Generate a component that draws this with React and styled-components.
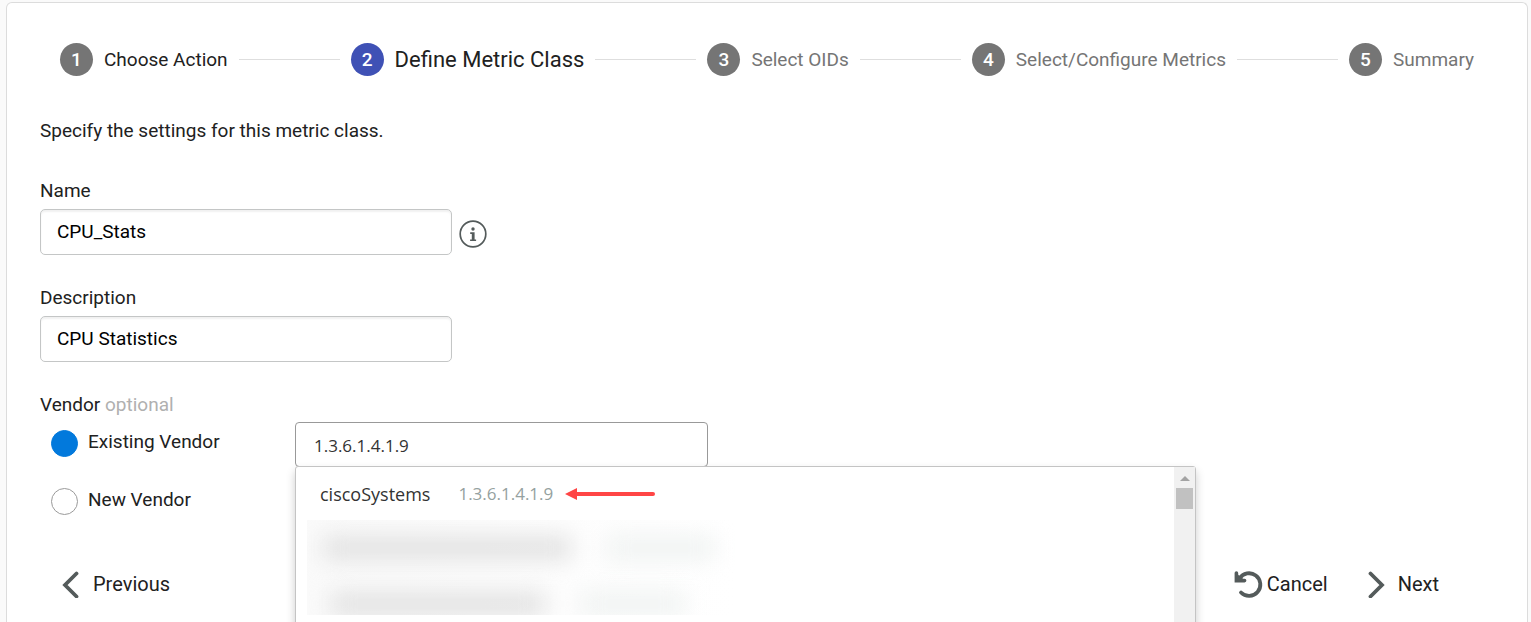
import { Fragment, useState } from 'react';
import styled, { createGlobalStyle } from 'styled-components';

const GlobalStyle = createGlobalStyle`
  * {
    box-sizing: border-box;
  }

  body {
    margin: 0;
    background: #fafafa;
    color: #212121;
    font-family: Roboto, "Liberation Sans", sans-serif;
    font-size: 19px;
    line-height: 24px;
  }

  button, input {
    font: inherit;
    color: inherit;
  }
`;

const Page = styled.div`
  height: 100vh;
  display: flex;
  padding: 2px 3px 0 6px;
  overflow: hidden;
`;

const Card = styled.main`
  flex: 1;
  padding: 40px 33px 0;
  background: #fff;
  border: 1px solid #dcdcdc;
  border-bottom: none;
  border-radius: 6px 6px 0 0;
`;

const Stepper = styled.ol`
  display: flex;
  align-items: center;
  gap: 11px;
  margin: 0 0 43px;
  padding: 0 20px;
  list-style: none;
`;

const Step = styled.li`
  display: flex;
  align-items: center;
  gap: 11px;
  white-space: nowrap;
  color: ${props => props.$pending ? '#757575' : '#212121'};
  font-size: ${props => props.$active ? '22px' : '19px'};
`;

const StepNumber = styled.span`
  width: 33px;
  height: 33px;
  display: flex;
  justify-content: center;
  align-items: center;
  border-radius: 50%;
  background: ${props => props.$active ? '#3f51b5' : '#757575'};
  color: #fff;
  font-size: 19px;
  font-weight: 500;
`;

const StepLine = styled.li`
  flex: 1;
  height: 1px;
  background: #dedede;
`;

const Intro = styled.p`
  margin: 0 0 36px;
`;

const Field = styled.div`
  display: flex;
  flex-direction: column;
  gap: 6px;
  margin-bottom: 31px;
`;

const FieldRow = styled.div`
  display: flex;
  align-items: center;
  gap: 7px;
`;

const TextInput = styled.input`
  width: 412px;
  height: 46px;
  padding: 0 16px 2px;
  background: #fff;
  color: #000;
  border: 1px solid #c4c6c6;
  border-radius: 5px;
  box-shadow: inset 0 2px 2px rgba(0, 0, 0, 0.06);
  outline: none;
`;

const InfoButton = styled.button`
  display: flex;
  padding: 4px 0 0;
  border: none;
  background: none;
  color: #545b5b;
`;

const VendorGroup = styled.fieldset`
  min-width: 0;
  margin: 0;
  padding: 0;
  border: none;
`;

const Legend = styled.legend`
  padding: 0 0 5px;
`;

const Optional = styled.span`
  color: #b0b0b0;
`;

const VendorBody = styled.div`
  display: grid;
  grid-template-columns: 255px 1fr;
`;

const RadioList = styled.div`
  display: flex;
  flex-direction: column;
  gap: 31px;
  padding: 8px 0 0 11px;
`;

const RadioLabel = styled.label`
  height: 27px;
  display: flex;
  gap: 10px;
`;

const Radio = styled.input`
  appearance: none;
  width: 27px;
  height: 27px;
  margin: 0;
  border: 1px solid #9a9a9a;
  border-radius: 50%;
  background: #fff;

  &:checked {
    border-color: #0279dc;
    background: #0279dc;
  }
`;

const Combobox = styled.div`
  position: relative;
  font-family: "Open Sans", "Noto Sans", sans-serif;
`;

const ComboInput = styled.input`
  display: block;
  width: 413px;
  height: 45px;
  padding: 2px 18px 0;
  background: #fff;
  color: #333;
  font-size: 17px;
  border: 1px solid #999;
  border-radius: 4px;
  outline: none;
`;

const Menu = styled.div`
  position: absolute;
  top: 44px;
  left: 0;
  z-index: 10;
  width: 901px;
  height: 280px;
  display: flex;
  background: #fff;
  border: 1px solid #c4c4c4;
  border-radius: 3px;
  box-shadow: 0 5px 10px rgba(0, 0, 0, 0.2);
`;

const Options = styled.ul`
  flex: 1;
  margin: 0;
  padding: 0;
  list-style: none;
`;

const Option = styled.li`
  height: 53px;
  display: flex;
  align-items: center;
  padding: 1px 0 0 24px;
  color: #333;
  font-size: 18px;
`;

const Oid = styled.span`
  margin: 0 12px 0 28px;
  color: #95a1a0;
  font-size: 17px;
`;

const Redacted = styled.li`
  width: 428px;
  height: 95px;
  display: flex;
  flex-direction: column;
  gap: 32px;
  margin-left: 11px;
  padding: 16px 16px 0;
  overflow: hidden;
  background: linear-gradient(to right, #fafafa, #fff);
`;

const RedactedRow = styled.div`
  display: flex;
  flex: none;
  gap: 36px;
  padding-left: ${props => props.$indent ? '8px' : '0'};
  filter: blur(11px);
`;

const Smudge = styled.span`
  width: ${props => props.$width};
  height: 24px;
  background: ${props => props.$light ? '#f0f3f2' : '#e2e2e2'};
`;

const ScrollTrack = styled.div`
  width: 21px;
  display: flex;
  flex-direction: column;
  align-items: center;
  background: #f1f1f1;
`;

const ScrollArrow = styled.span`
  margin: 9px 0 7px;
  border: 5px solid transparent;
  border-top: none;
  border-bottom-color: #a3a3a3;
`;

const ScrollThumb = styled.span`
  width: 17px;
  height: 21px;
  background: #c1c1c1;
`;

const Footer = styled.footer`
  display: flex;
  align-items: center;
  margin-top: 55px;
  padding: 0 55px 0 21px;
`;

const NavButton = styled.button`
  display: flex;
  align-items: center;
  gap: ${props => props.$tight ? '4px' : '12px'};
  margin-left: ${props => props.$push ? 'auto' : '0'};
  margin-right: ${props => props.$tight ? '38px' : '0'};
  padding: 0;
  border: none;
  background: none;
  font-size: 20px;
  line-height: 28px;
  cursor: pointer;

  svg {
    color: #545b5b;
  }
`;

const STEPS = ['Choose Action', 'Define Metric Class', 'Select OIDs', 'Select/Configure Metrics', 'Summary'];
const CURRENT_STEP = 1;

const InfoIcon = () => (
  <svg width="28" height="28" viewBox="0 0 28 28" fill="none" aria-hidden="true">
    <circle cx="14" cy="14" r="12.8" stroke="currentColor" strokeWidth="1.7" />
    <circle cx="14" cy="9" r="1.7" fill="currentColor" />
    <path d="M11.2 12.2h4.4v7.2h1.5v1.7h-6v-1.7h1.7v-5.5h-1.6z" fill="currentColor" />
  </svg>
);

const Chevron = ({ right=false }) => (
  <svg width="20" height="28" viewBox="0 0 20 28" fill="none" aria-hidden="true">
    <path
      d={right ? 'M4.5 3.5L16 15 4.5 26.5' : 'M15.5 3.5L4 15l11.5 11.5'}
      stroke="currentColor"
      strokeWidth="3.8"
      strokeLinecap="round"
    />
  </svg>
);

const UndoIcon = () => (
  <svg width="29" height="28" viewBox="0 0 29 28" fill="none" aria-hidden="true">
    <path d="M5.5 8.5A11.3 11.3 0 1 1 7 22.5" stroke="currentColor" strokeWidth="3.8" strokeLinecap="round" />
    <path d="M2.4 3v7.6h8.2" stroke="currentColor" strokeWidth="3.6" strokeLinecap="round" />
    <path d="M2 3l9 7.5H2z" fill="currentColor" />
  </svg>
);

const PointerArrow = () => (
  <svg width="90" height="14" viewBox="0 0 90 14" aria-hidden="true">
    <path d="M0 7l12-6v12z" fill="#ff4545" />
    <path d="M11 7h77" stroke="#ff4545" strokeWidth="4" strokeLinecap="round" />
  </svg>
);

const StepHeader = () => (
  <Stepper>
    {STEPS.map((label, i) => (
      <Fragment key={label}>
        {i > 0 && <StepLine aria-hidden="true" />}
        <Step $active={i === CURRENT_STEP} $pending={i > CURRENT_STEP}>
          <StepNumber $active={i === CURRENT_STEP}>{i + 1}</StepNumber>
          {label}
        </Step>
      </Fragment>
    ))}
  </Stepper>
);

const VendorSelect = () => {
  const [ query, setQuery ] = useState('1.3.6.1.4.1.9');

  return (
    <Combobox>
      <ComboInput
        type="text"
        role="combobox"
        aria-label="Existing vendor"
        aria-expanded="true"
        aria-controls="vendor-options"
        value={query}
        onChange={e => setQuery(e.target.value)}
      />
      <Menu>
        <Options id="vendor-options" role="listbox">
          <Option role="option" aria-selected="false">
            ciscoSystems
            <Oid>1.3.6.1.4.1.9</Oid>
            <PointerArrow />
          </Option>
          <Redacted aria-hidden="true">
            <RedactedRow>
              <Smudge $width="248px" />
              <Smudge $width="108px" $light />
            </RedactedRow>
            <RedactedRow $indent>
              <Smudge $width="214px" />
              <Smudge $width="104px" $light />
            </RedactedRow>
          </Redacted>
        </Options>
        <ScrollTrack aria-hidden="true">
          <ScrollArrow />
          <ScrollThumb />
        </ScrollTrack>
      </Menu>
    </Combobox>
  );
}

const App = () => {
  const [ vendor, setVendor ] = useState('existing');

  return (
    <>
      <GlobalStyle />
      <Page>
        <Card>
          <StepHeader />
          <Intro>Specify the settings for this metric class.</Intro>
          <Field>
            <label htmlFor="name">Name</label>
            <FieldRow>
              <TextInput id="name" type="text" defaultValue="CPU_Stats" />
              <InfoButton type="button" aria-label="Name help">
                <InfoIcon />
              </InfoButton>
            </FieldRow>
          </Field>
          <Field>
            <label htmlFor="description">Description</label>
            <TextInput id="description" type="text" defaultValue="CPU Statistics" />
          </Field>
          <VendorGroup>
            <Legend>Vendor <Optional>optional</Optional></Legend>
            <VendorBody>
              <RadioList>
                <RadioLabel>
                  <Radio
                    type="radio"
                    name="vendor"
                    checked={vendor === 'existing'}
                    onChange={() => setVendor('existing')}
                  />
                  Existing Vendor
                </RadioLabel>
                <RadioLabel>
                  <Radio
                    type="radio"
                    name="vendor"
                    checked={vendor === 'new'}
                    onChange={() => setVendor('new')}
                  />
                  New Vendor
                </RadioLabel>
              </RadioList>
              <VendorSelect />
            </VendorBody>
          </VendorGroup>
          <Footer>
            <NavButton type="button">
              <Chevron />
              Previous
            </NavButton>
            <NavButton type="button" $push $tight>
              <UndoIcon />
              Cancel
            </NavButton>
            <NavButton type="button">
              <Chevron right />
              Next
            </NavButton>
          </Footer>
        </Card>
      </Page>
    </>
  );
}

export default App;
